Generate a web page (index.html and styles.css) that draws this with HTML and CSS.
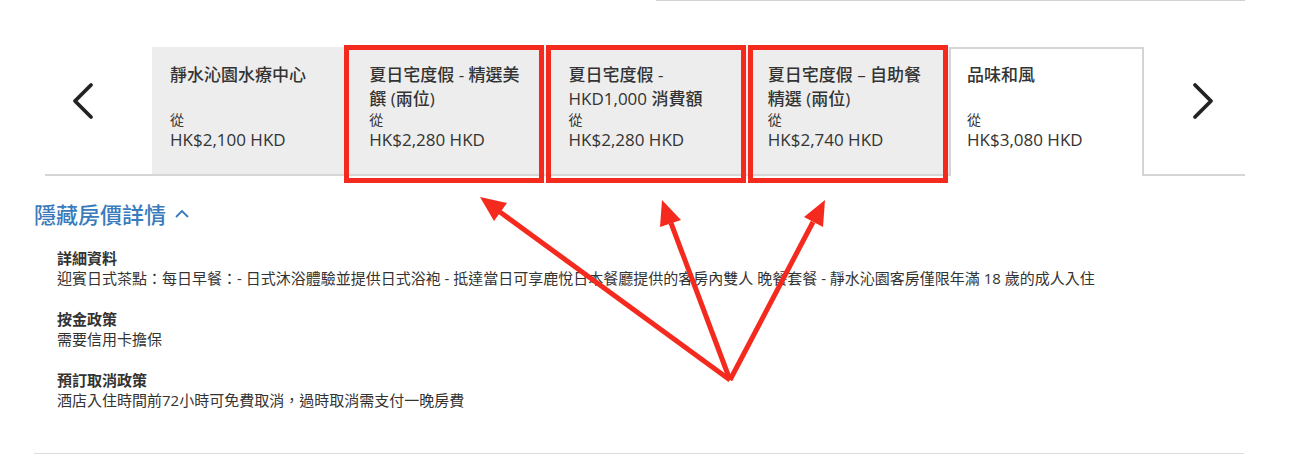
FILE: index.html
```html
<!DOCTYPE html>
<html lang="zh-Hant">
<head>
    <meta charset="UTF-8">
    <meta name="viewport" content="width=device-width, initial-scale=1.0">
    <title>房價方案</title>
    <link rel="stylesheet" href="styles.css">
</head>
<body>
    <div class="top-rule"></div>

    <!-- Rate plan tabs -->
    <div class="carousel">
        <button class="nav-btn prev" aria-label="上一個">
            <svg width="22" height="38" viewBox="0 0 22 38"><polyline points="19,3 3,19 19,35" /></svg>
        </button>

        <div class="tabs">
            <div class="tab">
                <div class="tab-title">靜水沁園水療中心</div>
                <div class="tab-from">從</div>
                <div class="tab-price">HK$2,100 HKD</div>
            </div>
            <div class="tab">
                <div class="tab-title">夏日宅度假 - 精選美饌 (兩位)</div>
                <div class="tab-from">從</div>
                <div class="tab-price">HK$2,280 HKD</div>
            </div>
            <div class="tab">
                <div class="tab-title">夏日宅度假 - HKD1,000 消費額</div>
                <div class="tab-from">從</div>
                <div class="tab-price">HK$2,280 HKD</div>
            </div>
            <div class="tab">
                <div class="tab-title">夏日宅度假 – 自助餐精選 (兩位)</div>
                <div class="tab-from">從</div>
                <div class="tab-price">HK$2,740 HKD</div>
            </div>
            <div class="tab active">
                <div class="tab-title">品味和風</div>
                <div class="tab-from">從</div>
                <div class="tab-price">HK$3,080 HKD</div>
            </div>
        </div>

        <button class="nav-btn next" aria-label="下一個">
            <svg width="22" height="38" viewBox="0 0 22 38"><polyline points="3,3 19,19 3,35" /></svg>
        </button>
    </div>

    <!-- Rate details -->
    <div class="rate-details">
        <a class="toggle" href="#">隱藏房價詳情
            <svg width="16" height="10" viewBox="0 0 16 10"><polyline points="2,8 8,2 14,8" /></svg>
        </a>

        <div class="detail-list">
            <div class="detail">
                <div class="detail-label">詳細資料</div>
                <div class="detail-text">迎賓日式茶點：每日早餐：- 日式沐浴體驗並提供日式浴袍 - 抵達當日可享鹿悅日本餐廳提供的客房內雙人 晚餐套餐 - 靜水沁園客房僅限年滿 18 歲的成人入住</div>
            </div>
            <div class="detail">
                <div class="detail-label">按金政策</div>
                <div class="detail-text">需要信用卡擔保</div>
            </div>
            <div class="detail">
                <div class="detail-label">預訂取消政策</div>
                <div class="detail-text">酒店入住時間前72小時可免費取消，過時取消需支付一晚房費</div>
            </div>
        </div>
    </div>

    <!-- Annotation layer drawn over the screenshot -->
    <svg class="annotations" width="1291" height="470" viewBox="0 0 1291 470">
        <rect x="346.5" y="47.5" width="195" height="133" />
        <rect x="548.5" y="47.5" width="195" height="133" />
        <rect x="750.5" y="47.5" width="195" height="133" />
        <line x1="730" y1="380" x2="500" y2="212" />
        <line x1="730" y1="380" x2="671" y2="223" />
        <line x1="730" y1="380" x2="813" y2="222" />
        <polygon points="480,197 507,203 494,221" />
        <polygon points="662,200 681,220 660,227" />
        <polygon points="825,200 823,227 804,217" />
    </svg>
</body>
</html>
```

FILE: styles.css
```css
body {
    font-family: "Open Sans", "Noto Sans CJK TC", sans-serif;
    color: #333;
    background-color: white;
    margin: 0;
    padding: 0;
    position: relative;
    width: 1291px;
    height: 470px;
    overflow: hidden;
}

.top-rule {
    height: 1px;
    width: 589px;
    margin-left: 656px;
    background-color: #d2d2d2;
}

.carousel {
    display: flex;
    width: 1200px;
    height: 127px;
    margin: 46px 0 0 45px;
    border-bottom: 2px solid #d6d6d6;
}

.nav-btn {
    background: none;
    border: none;
    padding: 0;
    cursor: pointer;
    display: flex;
    align-items: flex-start;
    padding-top: 35px;
}

.nav-btn svg polyline {
    fill: none;
    stroke: #222;
    stroke-width: 3.8;
    stroke-linecap: round;
    stroke-linejoin: round;
}

.nav-btn.prev {
    width: 107px;
    padding-left: 27px;
}

.nav-btn.next {
    width: 101px;
    padding-left: 48px;
}

.tabs {
    display: flex;
}

.tab {
    box-sizing: border-box;
    width: 199.25px;
    padding: 16px 18px 0 18px;
    background-color: #ededed;
}

.tab.active {
    width: 195px;
    background-color: white;
    border: 2px solid #d4d4d4;
    border-bottom: none;
    padding: 14px 16px 0 16px;
    margin-bottom: -2px;
}

.tab-title {
    font-size: 17px;
    font-weight: 500;
    line-height: 24px;
    height: 48px;
}

.tab-from {
    font-size: 14px;
    line-height: 18px;
}

.tab-price {
    font-size: 17px;
    font-weight: 500;
    line-height: 22px;
}

.rate-details {
    margin: 23px 0 0 34px;
    width: 1210px;
    height: 254px;
    border-bottom: 1px solid #dcdcdc;
}

.toggle {
    display: inline-flex;
    align-items: center;
    gap: 8px;
    font-size: 22px;
    line-height: 30px;
    font-weight: 500;
    color: #3a7bbd;
    text-decoration: none;
}

.toggle svg polyline {
    fill: none;
    stroke: #3a7bbd;
    stroke-width: 1.8;
}

.detail-list {
    margin: 20px 0 0 23px;
}

.detail {
    margin-bottom: 22px;
    font-size: 15px;
    line-height: 19.5px;
}

.detail-label {
    font-weight: bold;
}

.annotations {
    position: absolute;
    top: 0;
    left: 0;
    pointer-events: none;
}

.annotations rect {
    fill: none;
    stroke: #f52a1e;
    stroke-width: 5;
}

.annotations line {
    stroke: #f52a1e;
    stroke-width: 5;
}

.annotations polygon {
    fill: #f52a1e;
}
```
